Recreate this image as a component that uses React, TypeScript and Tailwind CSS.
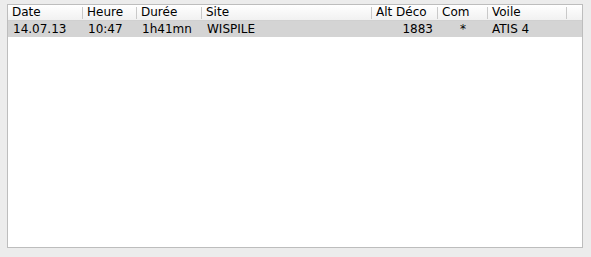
const columns = [
  { label: 'Date', width: 'w-[75px]' },
  { label: 'Heure', width: 'w-[54px]' },
  { label: 'Durée', width: 'w-[65px]' },
  { label: 'Site', width: 'w-[170px]' },
  { label: 'Alt Déco', width: 'w-[66px]' },
  { label: 'Com', width: 'w-[50px]' },
  { label: 'Voile', width: 'w-[79px]' },
];

const flights = [
  { date: '14.07.13', heure: '10:47', duree: '1h41mn', site: 'WISPILE', alt: '1883', com: '*', voile: 'ATIS 4' },
];

export default function App() {
  return (
    <div className="w-[591px] h-[257px] bg-[#ececec] pt-[4px] pl-[7px] font-['DejaVu_Sans',sans-serif] text-[12px] text-black">
      <div className="w-[576px] h-[244px] bg-white border border-[#bdbdbd] flex flex-col">
        {/* column headers */}
        <div className="flex h-[16px] bg-gradient-to-b from-white to-[#f1f1f1] border-b border-[#d0d0d0]">
          {columns.map((c) => (
            <div key={c.label} className={`${c.width} flex items-center`}>
              <span className="flex-1 pl-[4px] leading-[15px]">{c.label}</span>
              <span className="w-px h-[12px] bg-[#c9c9c9]" />
            </div>
          ))}
          <div className="flex-1" />
        </div>

        {flights.map((f) => (
          <div key={f.date + f.heure} className="flex h-[16px] items-center bg-[#d4d4d4] leading-[16px]">
            <div className="w-[75px] pl-[5px]">{f.date}</div>
            <div className="w-[54px] pl-[5px]">{f.heure}</div>
            <div className="w-[65px] pl-[5px]">{f.duree}</div>
            <div className="w-[170px] pl-[5px]">{f.site}</div>
            <div className="w-[66px] pr-[5px] text-right">{f.alt}</div>
            <div className="w-[50px] text-center">{f.com}</div>
            <div className="w-[79px] pl-[4px]">{f.voile}</div>
          </div>
        ))}
      </div>
    </div>
  );
}
